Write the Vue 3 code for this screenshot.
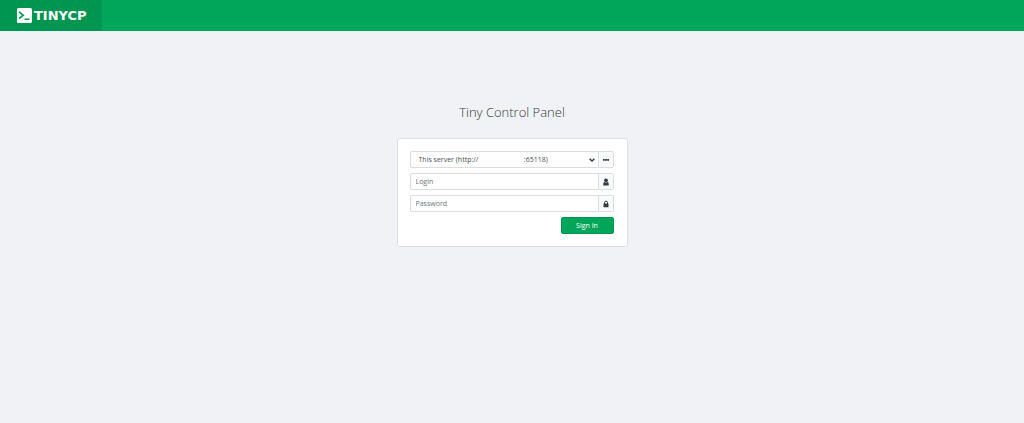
<script setup>
import { ref } from 'vue'

const gap = '\u00a0'.repeat(25)
const servers = [`This server (http://${gap}:65118)`]
const server = ref(servers[0])
const login = ref('')
const password = ref('')
</script>

<template>
  <div class="page">
    <header class="topbar">
      <a class="brand" href="#">
        <svg class="brand-mark" viewBox="0 0 15 15" aria-hidden="true">
          <rect width="15" height="15" rx="1.5" fill="#fff" />
          <path d="M2 3.8 6.2 7.2 2 10.6" fill="none" stroke="#009551" stroke-width="1.7" />
          <path d="M7.5 11.2h5" stroke="#009551" stroke-width="1.4" />
        </svg>
        <span>TINYCP</span>
      </a>
    </header>

    <main class="content">
      <h1>Tiny Control Panel</h1>
      <form class="card" @submit.prevent>
        <div class="group">
          <div class="select-wrap">
            <select v-model="server" aria-label="Server">
              <option v-for="s in servers" :key="s" :value="s">{{ s }}</option>
            </select>
            <svg class="chevron" viewBox="0 0 6 4" aria-hidden="true">
              <path d="M.6 .7 3 3 5.4 .7" fill="none" stroke="#343a40" stroke-width="1.4" />
            </svg>
          </div>
          <button class="addon" type="button" aria-label="More servers">
            <svg viewBox="0 0 8 8" aria-hidden="true">
              <path d="M1 3h1.8v1.8H1zM3.1 3h1.8v1.8H3.1zM5.2 3H7v1.8H5.2z" fill="#343a40" />
            </svg>
          </button>
        </div>
        <div class="group">
          <input v-model="login" type="text" placeholder="Login" aria-label="Login" />
          <span class="addon">
            <svg viewBox="0 0 8 8" aria-hidden="true">
              <circle cx="4" cy="2.3" r="1.9" fill="#343a40" />
              <path d="M1.3 7.5Q1 4.1 2.6 4q1.4 1 2.8 0Q7 4.1 6.7 7.5z" fill="#343a40" />
            </svg>
          </span>
        </div>
        <div class="group">
          <input v-model="password" type="password" placeholder="Password" aria-label="Password" />
          <span class="addon">
            <svg viewBox="0 0 8 8" aria-hidden="true">
              <path d="M2.5 4V2.7a1.5 1.5 0 0 1 3 0V4" fill="none" stroke="#343a40" stroke-width="1" />
              <rect x="1.5" y="3.6" width="5" height="3.6" rx=".4" fill="#343a40" />
            </svg>
          </span>
        </div>
        <button class="submit" type="submit">Sign In</button>
      </form>
    </main>
  </div>
</template>

<style>
body {
  background: #f0f2f6;
}
</style>

<style scoped>
.page {
  font-family: "Open Sans", "Noto Sans", sans-serif;
  font-size: 7px;
  color: #495057;
}
.topbar {
  display: flex;
  height: 31px;
  background: #00a65a;
}
.brand {
  display: flex;
  align-items: center;
  gap: 2px;
  box-sizing: border-box;
  width: 102px;
  padding-left: 17px;
  background: #009551;
  color: #fff;
  font: bold 13px "DejaVu Sans", sans-serif;
  text-decoration: none;
}
.brand-mark {
  width: 15px;
  height: 15px;
}
.content {
  display: flex;
  flex-direction: column;
  align-items: center;
  padding-top: 72px;
}
h1 {
  margin: 0 0 17px;
  color: #343a40;
  font-size: 13px;
  font-weight: 300;
  line-height: 18px;
}
.card {
  display: flex;
  flex-direction: column;
  gap: 5px;
  box-sizing: border-box;
  width: 231px;
  padding: 12px 13px 12px 12px;
  border: 1px solid #dcdfe2;
  border-radius: 3px;
  background: #fff;
}
.group {
  display: flex;
  box-sizing: border-box;
  height: 17px;
  border: 1px solid #dadde1;
  border-radius: 2px;
}
.select-wrap {
  position: relative;
  display: flex;
  flex: 1;
}
input,
select {
  flex: 1;
  min-width: 0;
  padding: 0 5px;
  border: 0;
  background: transparent;
  color: #495057;
  font: inherit;
}
select {
  appearance: none;
  padding-left: 8px;
}
input::placeholder {
  color: #6c757d;
  opacity: 1;
}
.chevron {
  position: absolute;
  top: 6px;
  right: 3px;
  width: 6px;
  height: 4px;
  pointer-events: none;
}
.addon {
  display: flex;
  align-items: center;
  justify-content: center;
  box-sizing: border-box;
  width: 15px;
  padding: 0;
  border: 0;
  border-left: 1px solid #dadde1;
  background: #f8fafc;
}
.addon svg {
  width: 8px;
  height: 8px;
}
.submit {
  align-self: flex-end;
  width: 53px;
  height: 17px;
  padding: 0;
  border: 1px solid #009551;
  border-radius: 2px;
  background: #00a65a;
  color: #fff;
  font: inherit;
}
</style>
